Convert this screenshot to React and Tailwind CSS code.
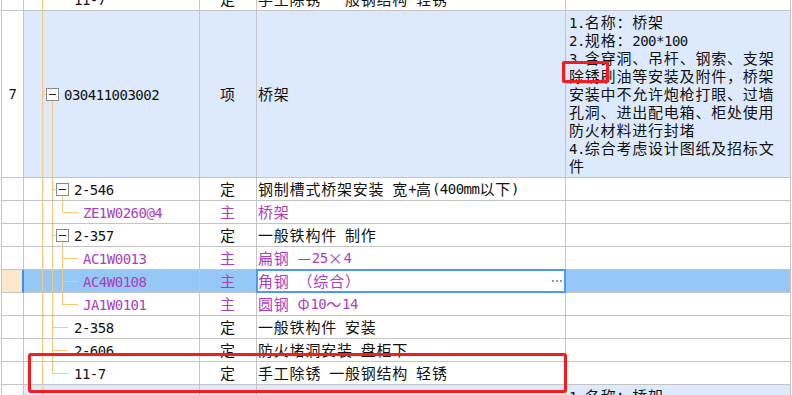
import React from "react";

const LINE = "#fcc57c";

function T({ text }) {
  const parts = [];
  let cur = "";
  let curA = null;
  for (const ch of text) {
    const a = ch.charCodeAt(0) < 128;
    if (curA === null || a === curA) {
      cur += ch;
      curA = a;
    } else {
      parts.push([curA, cur]);
      cur = ch;
      curA = a;
    }
  }
  if (cur) parts.push([curA, cur]);
  return (
    <>
      {parts.map(([a, t], i) =>
        a ? (
          <span key={i} className="font-['DejaVu_Sans_Mono',monospace] text-[14px] tracking-[-0.5px] whitespace-pre">
            {t}
          </span>
        ) : (
          <span key={i} className="font-['Noto_Sans_CJK_SC',sans-serif] text-[15px] tracking-[0.8px] whitespace-pre">
            {t}
          </span>
        )
      )}
    </>
  );
}

function Tree({ h, w, v = [], hl = [], box }) {
  const m = Math.floor(h / 2);
  return (
    <svg width={w} height={h} className="shrink-0 block" shapeRendering="crispEdges">
      {v.map(([x, y1, y2], i) => (
        <line key={"v" + i} x1={x + 0.5} x2={x + 0.5} y1={y1 === "m" ? m : y1 === "b" ? m + 7 : y1} y2={y2 === "m" ? m + 1 : y2 === "H" ? h : y2} stroke={LINE} />
      ))}
      {hl.map(([x1, x2], i) => (
        <line key={"h" + i} x1={x1} x2={x2} y1={m + 0.5} y2={m + 0.5} stroke={LINE} />
      ))}
      {box !== undefined && (
        <g>
          <rect x={box + 0.5} y={m - 6 + 0.5} width={12} height={12} fill="#fff" stroke="#8a8a8a" />
          <line x1={box + 3} x2={box + 10} y1={m + 0.5} y2={m + 0.5} stroke="#222" />
        </g>
      )}
    </svg>
  );
}

const trees = {
  last2: { w: 50, v: [[18, 0, "H"], [28, 0, "m"]], hl: [[28, 44]] },
  mid2: { w: 50, v: [[18, 0, "H"], [28, 0, "H"]], hl: [[28, 44]] },
  box2: { w: 50, v: [[18, 0, "H"], [28, 0, "H"], [38, "b", "H"]], hl: [[28, 32]], box: 32 },
  mid3: { w: 59, v: [[18, 0, "H"], [28, 0, "H"], [38, 0, "H"]], hl: [[38, 54]] },
  last3: { w: 59, v: [[18, 0, "H"], [28, 0, "H"], [38, 0, "m"]], hl: [[38, 54]] },
  item: { w: 40, v: [[18, 0, "H"], [28, "b", "H"]], hl: [[18, 22]], box: 22 },
};

function Row({ tall, num, tree, type, name, desc, purple, variant = "white" }) {
  const h = tall ? "h-[167px]" : "h-[23px]";
  const ch = tall ? 166 : 22;
  const bg =
    variant === "item" ? "bg-[#dde9fc]" : variant === "sel" ? "bg-[#95c8f4]" : "bg-white";
  const txt = purple ? "text-[#a83ec0]" : "text-[#111]";
  const cell = `${h} ${bg} border-r border-b border-[#c4c4c4]`;
  const tr = trees[tree];
  return (
    <div className="grid grid-cols-[22px_176px_57px_309px_225px]">
      {variant === "sel" ? (
        <div className={`${h} bg-[#fde7ca] border-r-2 border-r-[#3b8ef3] border-b border-b-[#c4c4c4]`} />
      ) : (
        <div className={`${h} bg-white border-r border-b border-[#c4c4c4] flex items-center justify-center text-[#111]`}>
          {num && <T text={num} />}
        </div>
      )}
      <div className={`${cell} flex items-stretch overflow-hidden`}>
        <Tree h={ch} w={tr.w} v={tr.v} hl={tr.hl} box={tr.box} />
        <span className={`self-center leading-[22px] whitespace-nowrap ${txt}`}>
          <T text={name[0]} />
        </span>
      </div>
      <div className={`${cell} flex items-center justify-center leading-[22px] ${txt}`}>
        <T text={type} />
      </div>
      {variant === "sel" ? (
        <div className={`${h} bg-white border-r border-b border-[#c4c4c4] relative flex items-center pl-[1px] leading-[22px] ${txt}`}>
          <T text={name[1]} />
          <div className="absolute -left-[1px] -top-[1px] -right-[1px] -bottom-[1px] border-2 border-[#4a9af5]" />
          <div className="absolute right-[3px] top-[10px] flex gap-[2px]">
            <div className="w-[2px] h-[2px] bg-[#6a9fd8]" />
            <div className="w-[2px] h-[2px] bg-[#6a9fd8]" />
            <div className="w-[2px] h-[2px] bg-[#6a9fd8]" />
          </div>
        </div>
      ) : (
        <div className={`${cell} flex items-center pl-[1px] leading-[22px] whitespace-nowrap overflow-hidden ${txt}`}>
          <T text={name[1]} />
        </div>
      )}
      <div className={`${cell} px-[3px] pt-[2px] leading-[18px] text-[#111] overflow-hidden`}>
        {desc &&
          desc.map((l, i) => (
            <div key={i} className="flex items-baseline h-[18px] whitespace-nowrap">
              <T text={l} />
            </div>
          ))}
      </div>
    </div>
  );
}

const DESC = [
  "1.名称：桥架",
  "2.规格：200*100",
  "3.含穿洞、吊杆、钢索、支架",
  "除锈刷油等安装及附件，桥架",
  "安装中不允许炮枪打眼、过墙",
  "孔洞、进出配电箱、柜处使用",
  "防火材料进行封堵",
  "4.综合考虑设计图纸及招标文",
  "件",
];

export default function App() {
  return (
    <div className="relative w-[792px] h-[395px] overflow-hidden bg-white font-['Noto_Sans_CJK_SC',sans-serif] text-[15px]">
      <div className="-mt-[12px] ml-[1px] border-l border-[#c4c4c4] w-[790px]">
        <Row tree="last2" type="定" name={["11-7", "手工除锈 一般钢结构 轻锈"]} />
        <Row tall variant="item" num="7" tree="item" type="项" name={["030411003002", "桥架"]} desc={DESC} />
        <Row tree="box2" type="定" name={["2-546", "钢制槽式桥架安装 宽+高(400mm以下)"]} />
        <Row tree="last3" purple type="主" name={["ZE1W0260@4", "桥架"]} />
        <Row tree="box2" type="定" name={["2-357", "一般铁构件 制作"]} />
        <Row tree="mid3" purple type="主" name={["AC1W0013", "扁钢 —25×4"]} />
        <Row tree="mid3" purple variant="sel" type="主" name={["AC4W0108", "角钢 （综合）"]} />
        <Row tree="last3" purple type="主" name={["JA1W0101", "圆钢 Φ10～14"]} />
        <Row tree="mid2" type="定" name={["2-358", "一般铁构件 安装"]} />
        <Row tree="mid2" type="定" name={["2-606", "防火堵洞安装 盘柜下"]} />
        <Row tree="last2" type="定" name={["11-7", "手工除锈 一般钢结构 轻锈"]} />
        <Row tall variant="item" num="8" tree="item" type="项" name={["030411003003", "桥架"]} desc={DESC} />
      </div>
      <div className="absolute left-[562px] top-[61px] w-[47px] h-[22px] border-[3px] border-[#f41c1c] rounded-[2px]" />
      <div className="absolute left-[28px] top-[353px] w-[539px] h-[40px] border-[3px] border-[#f41c1c] rounded-[3px]" />
    </div>
  );
}
